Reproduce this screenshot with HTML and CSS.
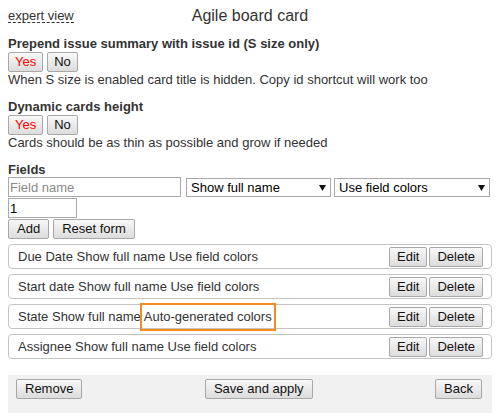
FILE: index.html
```html
<!DOCTYPE html>
<html lang="en">
<head>
<meta charset="utf-8">
<title>Agile board card</title>
<link rel="stylesheet" href="styles.css">
</head>
<body>
<div class="page">
  <header class="top">
    <span class="expert">expert view</span>
    <h1 class="title">Agile board card</h1>
    <span></span>
  </header>

  <section class="opt">
    <div class="opt-title">Prepend issue summary with issue id (S size only)</div>
    <div class="toggle"><button class="btn on">Yes</button><button class="btn">No</button></div>
    <div class="hint">When S size is enabled card title is hidden. Copy id shortcut will work too</div>
  </section>

  <section class="opt">
    <div class="opt-title">Dynamic cards height</div>
    <div class="toggle"><button class="btn on">Yes</button><button class="btn">No</button></div>
    <div class="hint">Cards should be as thin as possible and grow if needed</div>
  </section>

  <section class="fields">
    <div class="opt-title">Fields</div>
    <div class="field-form">
      <input class="inp name" placeholder="Field name">
      <div class="sel s1">
        <select><option>Show full name</option></select>
        <svg class="arrow" width="7" height="6" viewBox="0 0 7 6"><polygon points="0,0 7,0 3.5,6" fill="#111"/></svg>
      </div>
      <div class="sel s2">
        <select><option>Use field colors</option></select>
        <svg class="arrow" width="7" height="6" viewBox="0 0 7 6"><polygon points="0,0 7,0 3.5,6" fill="#111"/></svg>
      </div>
    </div>
    <input class="inp num" value="1">
    <div class="form-actions"><button class="btn wide">Add</button><button class="btn wide">Reset form</button></div>

    <ul class="field-list">
      <li class="field-row"><span class="desc">Due Date Show full name Use field colors</span><span class="acts"><button class="btn mid">Edit</button><button class="btn mid">Delete</button></span></li>
      <li class="field-row"><span class="desc">Start date Show full name Use field colors</span><span class="acts"><button class="btn mid">Edit</button><button class="btn mid">Delete</button></span></li>
      <li class="field-row"><span class="desc">State Show full name <span class="mark">Auto-generated colors</span></span><span class="acts"><button class="btn mid">Edit</button><button class="btn mid">Delete</button></span></li>
      <li class="field-row"><span class="desc">Assignee Show full name Use field colors</span><span class="acts"><button class="btn mid">Edit</button><button class="btn mid">Delete</button></span></li>
    </ul>
  </section>

  <footer class="bar">
    <button class="btn wide">Remove</button>
    <button class="btn wide">Save and apply</button>
    <button class="btn wide">Back</button>
  </footer>
</div>
</body>
</html>
```

FILE: styles.css
```css
html, body {
  margin: 0;
  padding: 0;
  background: #fff;
}
body {
  padding: 8px;
  font-family: "Liberation Sans", Arial, sans-serif;
  font-size: 13px;
  color: #333;
}
.page {
  width: 484px;
}
.top {
  display: grid;
  grid-template-columns: 1fr auto 1fr;
  align-items: start;
  height: 16px;
  margin-bottom: 12px;
}
.expert {
  justify-self: start;
  line-height: 16px;
  height: 14px;
  border-bottom: 1px dashed #333;
  color: #333;
}
.title {
  margin: 0;
  font-size: 16px;
  font-weight: normal;
  line-height: 16px;
  color: #333;
}
.opt {
  margin-bottom: 12px;
}
.opt-title {
  font-weight: bold;
  line-height: 15px;
  color: #333;
}
.toggle {
  display: flex;
  gap: 4px;
  margin-top: 1px;
}
.hint {
  line-height: 15px;
}
.btn {
  font-family: "Liberation Sans", Arial, sans-serif;
  font-size: 13px;
  line-height: 16px;
  height: 20px;
  padding: 1px 6px;
  margin: 0;
  color: #111;
  background: linear-gradient(#f8f8f8, #dcdcdc);
  border: 1px solid #a8a8a8;
  border-radius: 2px;
  box-sizing: border-box;
}
.btn.on {
  color: #f00;
}
.btn.wide {
  padding: 1px 8px;
}
.btn.mid {
  padding: 1px 7px;
}
.field-form {
  display: flex;
  align-items: flex-start;
}
.inp {
  font-family: "Liberation Sans", Arial, sans-serif;
  font-size: 13px;
  height: 20px;
  box-sizing: border-box;
  border: 1px solid #a9a9a9;
  padding: 0 1px;
  margin: 0;
  color: #000;
  outline: none;
  display: block;
}
.inp::placeholder {
  color: #8a8a8a;
}
.inp.name {
  width: 173px;
}
.inp.num {
  width: 69px;
  margin-top: 1px;
}
.sel {
  position: relative;
  margin-top: 1px;
}
.sel.s1 {
  width: 145px;
  margin-left: 5px;
}
.sel.s2 {
  width: 156px;
  margin-left: 3px;
}
.sel select {
  appearance: none;
  -webkit-appearance: none;
  width: 100%;
  height: 19px;
  box-sizing: border-box;
  border: 1px solid #a9a9a9;
  border-radius: 0;
  background: #fff;
  font-family: "Liberation Sans", Arial, sans-serif;
  font-size: 13px;
  color: #000;
  padding: 0 0 0 4px;
  margin: 0;
  display: block;
}
.sel .arrow {
  position: absolute;
  right: 5px;
  top: 7px;
}
.form-actions {
  display: flex;
  gap: 4px;
  margin-top: 1px;
}
.field-list {
  list-style: none;
  margin: 5px 0 0;
  padding: 0;
}
.field-row {
  display: flex;
  align-items: center;
  justify-content: space-between;
  height: 25px;
  box-sizing: border-box;
  border: 1px solid #c4c4c4;
  border-radius: 4px;
  padding: 0 8px 0 9px;
  margin-bottom: 5px;
  color: #333;
}
.acts {
  display: flex;
  gap: 2px;
}
.mark {
  position: relative;
}
.mark::after {
  content: "";
  position: absolute;
  left: -4px;
  right: -4px;
  top: -6px;
  bottom: -7px;
  border: 2px solid #f58a1f;
}
.bar {
  display: flex;
  justify-content: space-between;
  align-items: flex-start;
  background: #f1f1f1;
  margin-top: 16px;
  padding: 4px 10px 14px 8px;
}
```
